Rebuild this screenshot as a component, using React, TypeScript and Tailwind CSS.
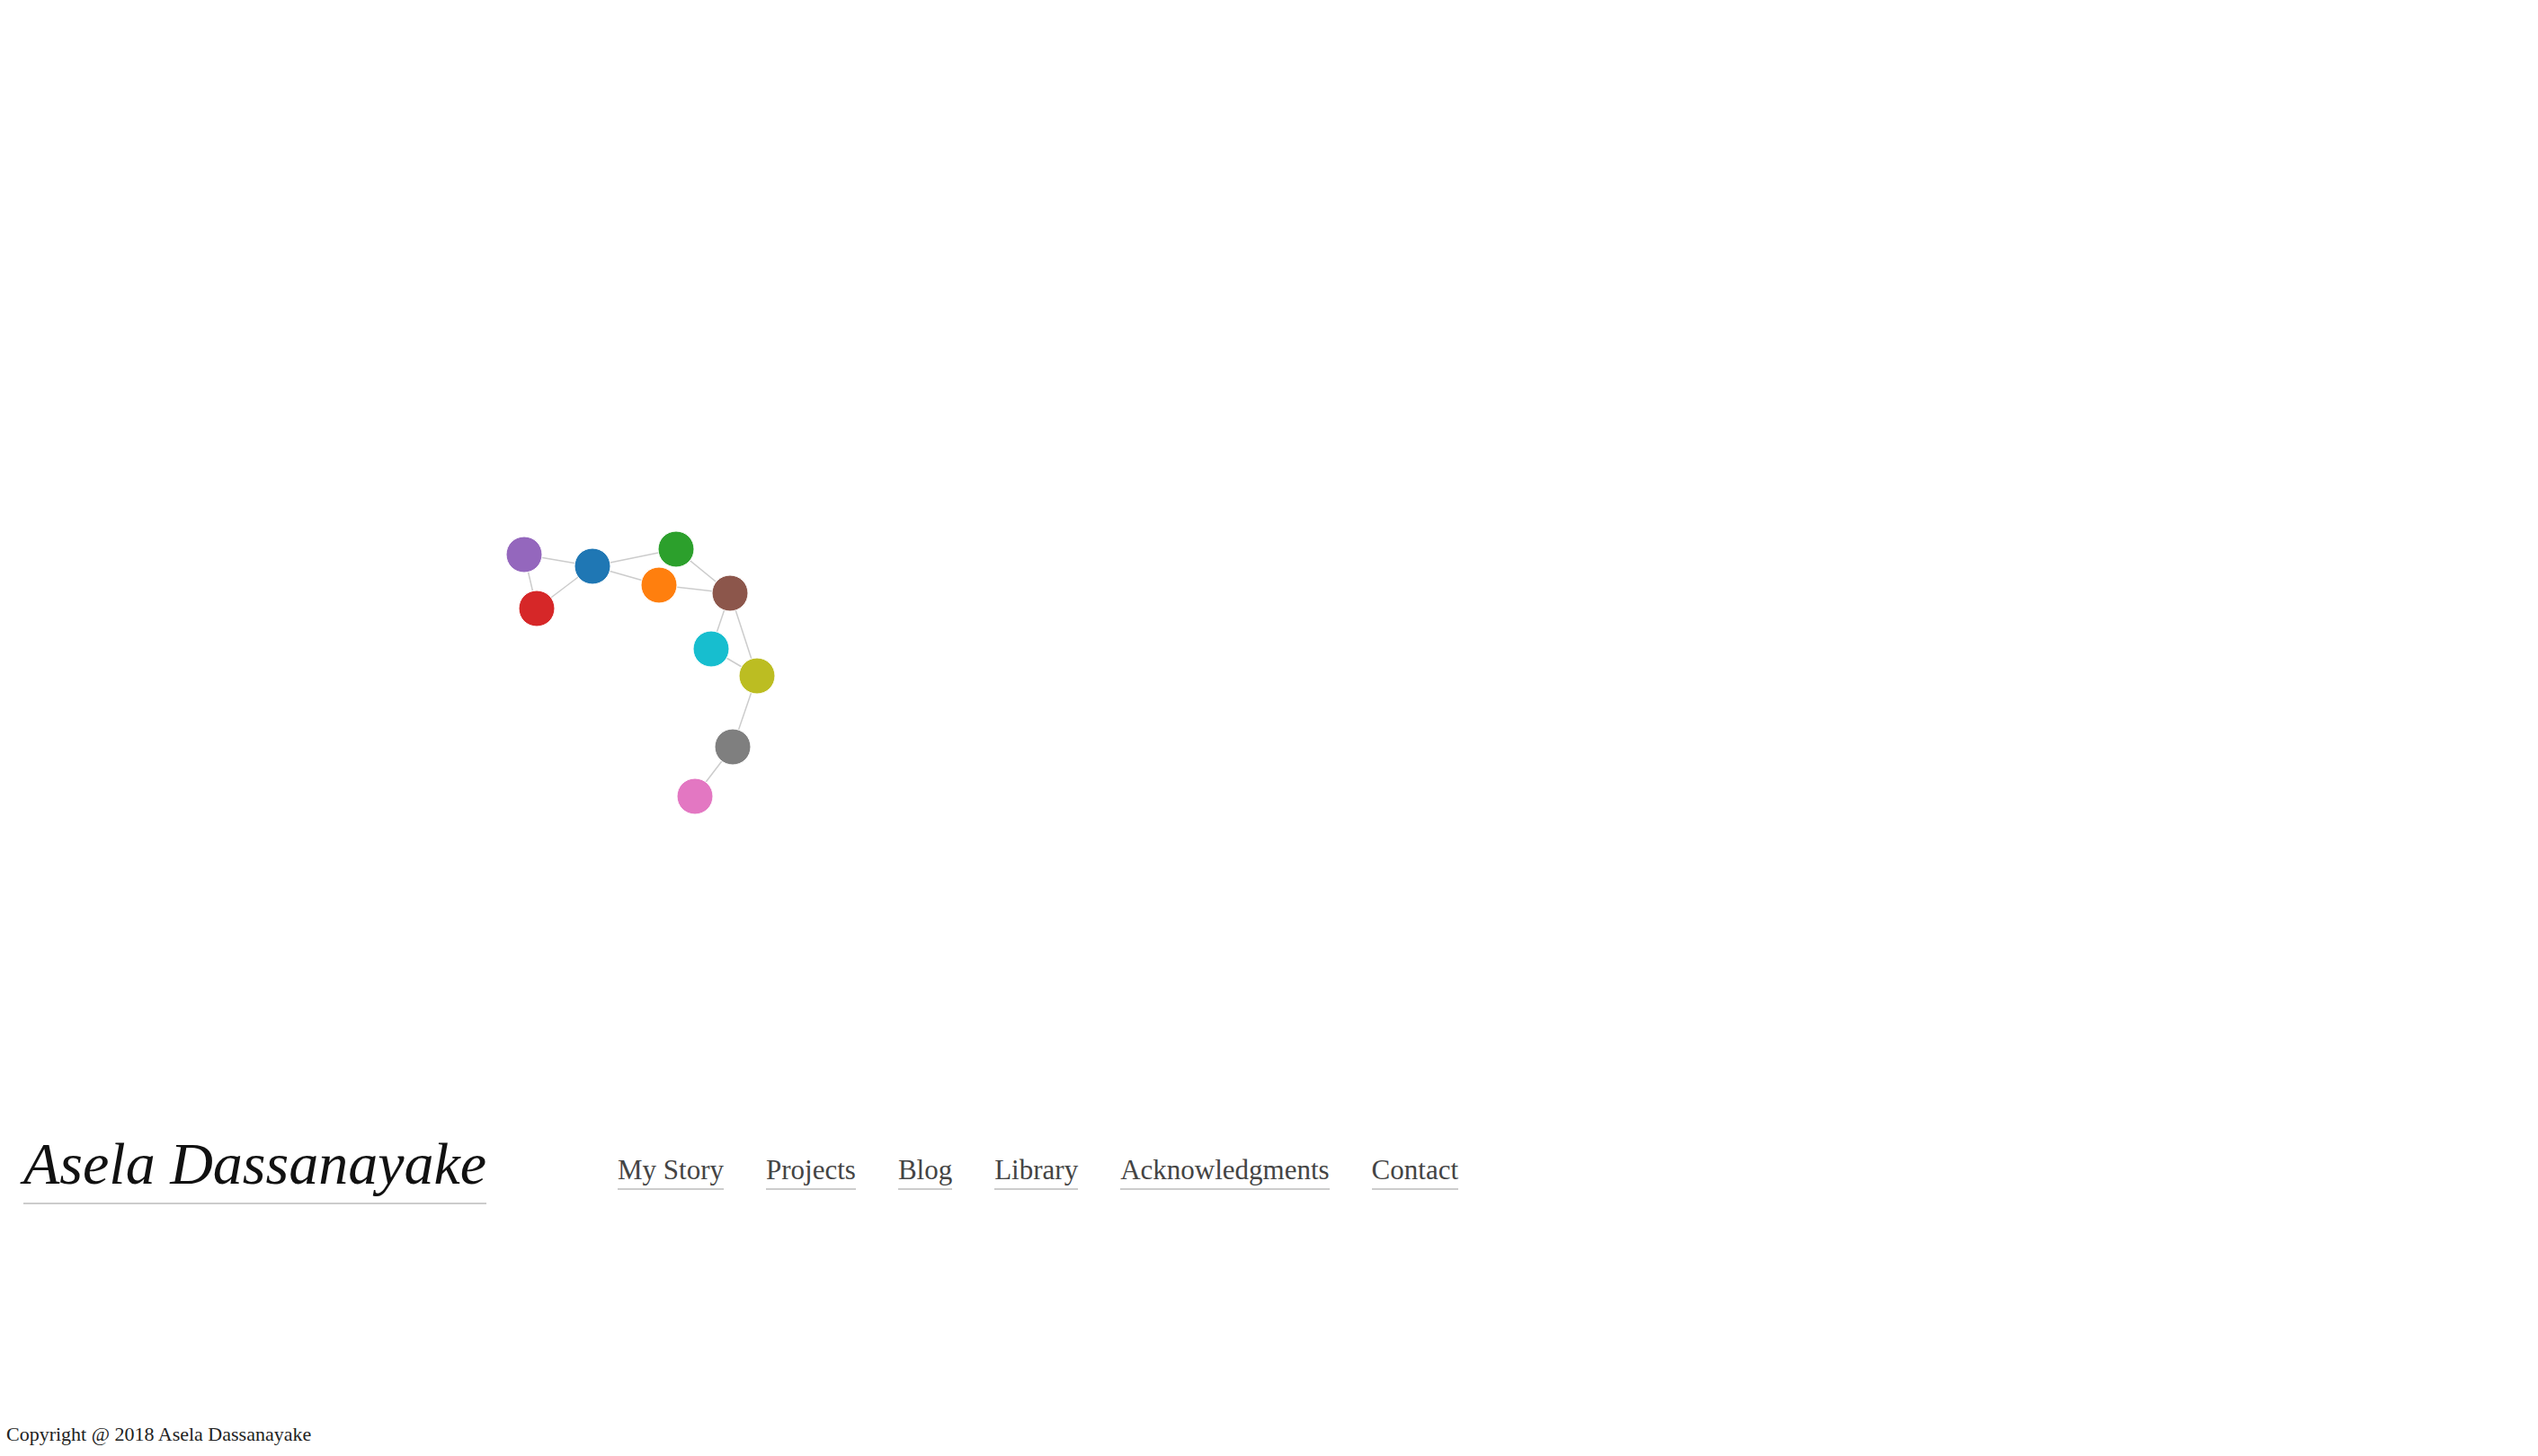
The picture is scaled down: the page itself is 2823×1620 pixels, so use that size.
import React from "react";

type Node = { id: string; x: number; y: number; color: string };

const NODES: Node[] = [
  { id: "purple", x: 583, y: 617, color: "#9467bd" },
  { id: "blue", x: 659, y: 630, color: "#1f77b4" },
  { id: "green", x: 752, y: 611, color: "#2ca02c" },
  { id: "orange", x: 733, y: 651, color: "#ff7f0e" },
  { id: "brown", x: 812, y: 660, color: "#8c564b" },
  { id: "red", x: 597, y: 677, color: "#d62728" },
  { id: "cyan", x: 791, y: 722, color: "#17becf" },
  { id: "olive", x: 842, y: 752, color: "#bcbd22" },
  { id: "gray", x: 815, y: 831, color: "#7f7f7f" },
  { id: "pink", x: 773, y: 886, color: "#e377c2" },
];

const LINKS: [string, string][] = [
  ["purple", "blue"],
  ["purple", "red"],
  ["red", "blue"],
  ["blue", "green"],
  ["blue", "orange"],
  ["orange", "brown"],
  ["green", "brown"],
  ["brown", "cyan"],
  ["brown", "olive"],
  ["cyan", "olive"],
  ["olive", "gray"],
  ["gray", "pink"],
];

const NAV_LINKS = ["My Story", "Projects", "Blog", "Library", "Acknowledgments", "Contact"];

const byId = (id: string) => NODES.find((n) => n.id === id)!;

function Graph() {
  return (
    <svg className="block h-[1240px] w-full" aria-hidden="true">
      <g stroke="#cccccc" strokeWidth={1.5}>
        {LINKS.map(([a, b]) => {
          const s = byId(a);
          const t = byId(b);
          return <line key={a + b} x1={s.x} y1={s.y} x2={t.x} y2={t.y} />;
        })}
      </g>
      <g stroke="#ffffff" strokeWidth={1}>
        {NODES.map((n) => (
          <circle key={n.id} cx={n.x} cy={n.y} r={20} fill={n.color} />
        ))}
      </g>
    </svg>
  );
}

export default function App() {
  return (
    <div className="flex min-h-screen flex-col bg-white font-['Liberation_Serif',serif]">
      <Graph />

      {/* Header */}
      <header className="flex items-end pl-[26px] pt-[22px]">
        <div className="w-[661px]">
          <a
            href="#"
            className="inline-block border-b-2 border-[#cccccc] pb-[10px] text-[66px] italic leading-none text-[#111111]"
          >
            Asela Dassanayake
          </a>
        </div>
        <nav className="mb-[16px] flex items-end gap-[47px]">
          {NAV_LINKS.map((l) => (
            <a
              key={l}
              href="#"
              className="border-b-2 border-[#cccccc] pb-[5px] text-[31px] leading-none text-[#444444]"
            >
              {l}
            </a>
          ))}
        </nav>
      </header>

      <div className="flex-1" />

      <footer className="px-[7px] pb-[13px] text-[22px] leading-none text-[#222222]">
        Copyright @ 2018 Asela Dassanayake
      </footer>
    </div>
  );
}
